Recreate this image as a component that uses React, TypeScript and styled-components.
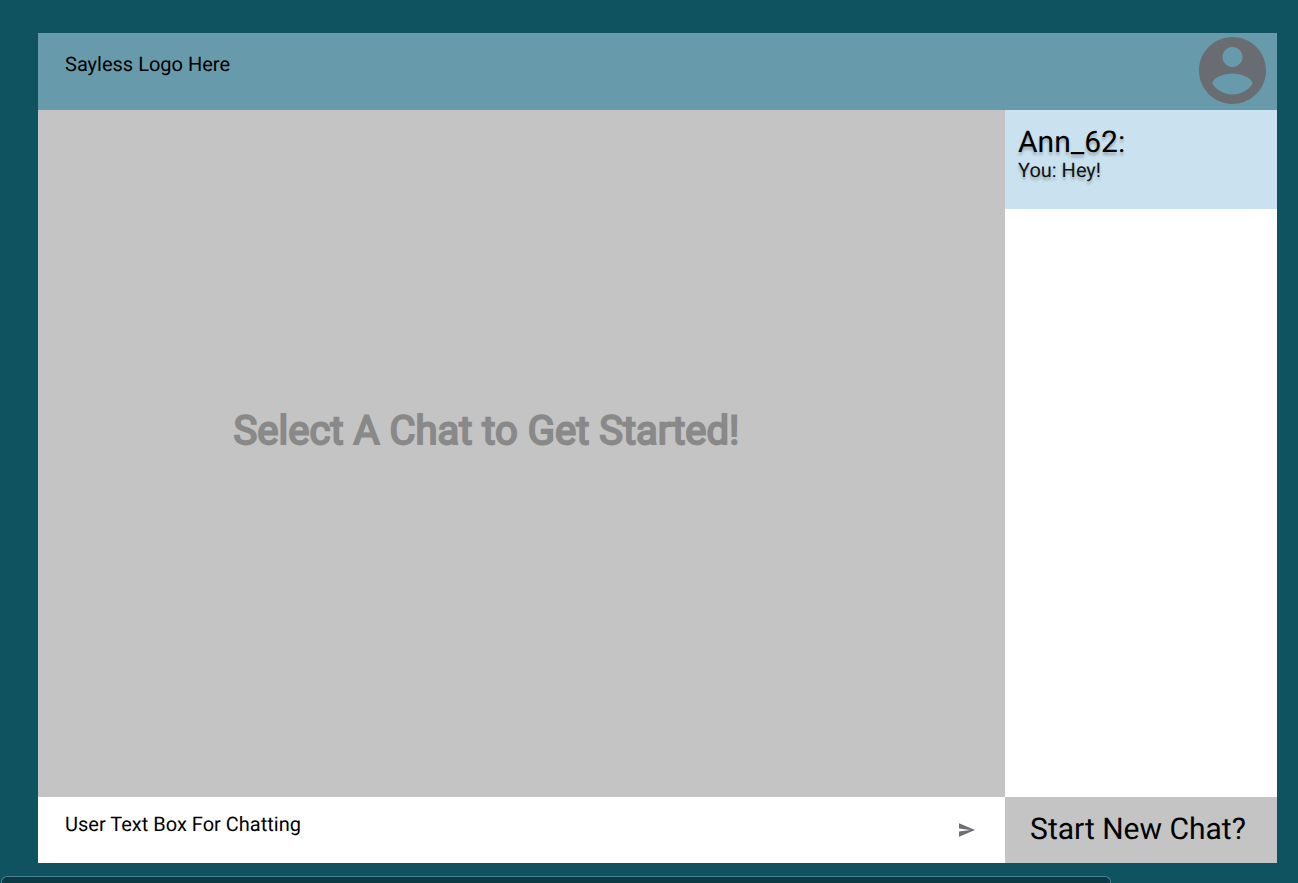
import React from 'react';
import styled, { createGlobalStyle } from 'styled-components';

const GlobalStyle = createGlobalStyle`
  *, *::before, *::after { box-sizing: border-box; }
  body {
    margin: 0;
    background: #0f5361;
    color: #000;
    font-family: Roboto, "Liberation Sans", sans-serif;
    font-size: 20px;
    line-height: 24px;
    text-rendering: geometricPrecision;
  }
  button, input { font: inherit; color: inherit; text-rendering: inherit; border: 0; border-radius: 0; margin: 0; padding: 0; background: none; }
  button { cursor: pointer; }
  h1, h2, p, ul { margin: 0; padding: 0; font-weight: 400; }
`;

const Page = styled.div`
  min-height: 100vh;
  display: flex;
  flex-direction: column;
`;

const Shell = styled.div`
  flex: 1;
  display: flex;
  flex-direction: column;
  margin: 33px 21px 13px 38px;
`;

const Header = styled.header`
  display: flex;
  justify-content: space-between;
  align-items: flex-start;
  height: 77px;
  padding: 4px 11px 0 27px;
  background: #679bab;
`;

const Logo = styled.p`
  margin-top: 15px;
`;

const ProfileButton = styled.button`
  display: flex;
  color: #696c71;
`;

const Columns = styled.div`
  flex: 1;
  display: grid;
  grid-template-columns: minmax(0, 1fr) 272px;
`;

const Conversation = styled.main`
  display: flex;
  flex-direction: column;
`;

const EmptyState = styled.div`
  flex: 1;
  display: flex;
  align-items: center;
  justify-content: center;
  padding: 0 70px 46px 0;
  background: #c4c4c4;
`;

const Prompt = styled.h1`
  font-size: 40px;
  line-height: 48px;
  color: #898989;
  -webkit-text-stroke: 2px #898989;
`;

const Composer = styled.form`
  display: flex;
  align-items: center;
  height: 66px;
  padding: 0 30px 0 27px;
  background: #fff;
`;

const MessageInput = styled.input`
  flex: 1;
  min-width: 0;
  height: 24px;
  margin-bottom: 12px;
  outline: none;
  &::placeholder { color: #000; opacity: 1; }
`;

const SendButton = styled.button`
  display: flex;
  color: #6c6e72;
`;

const Sidebar = styled.aside`
  display: flex;
  flex-direction: column;
  background: #fff;
`;

const ChatList = styled.ul`
  flex: 1;
  list-style: none;
`;

const ChatButton = styled.button`
  display: block;
  width: 100%;
  height: 99px;
  padding: 0 13px 10px;
  background: #cae2ef;
  text-align: left;
  text-shadow: 0 3px 3px rgba(0, 0, 0, 0.25);
`;

const ChatName = styled.span`
  display: block;
  font-size: 30px;
  line-height: 30px;
`;

const ChatPreview = styled.span`
  display: block;
  color: #111;
`;

const NewChatButton = styled.button`
  height: 66px;
  background: #c4c4c4;
  font-size: 30px;
  line-height: 36px;
  padding: 0 6px 0 0;
`;

const BottomPanel = styled.div`
  height: 7px;
  margin: 0 187px 0 1px;
  border: 1px solid #4c8290;
  border-bottom: 0;
  border-radius: 6px 6px 0 0;
  background: #0b3a45;
`;

const chats = [{ name: 'Ann_62', preview: 'You: Hey!' }];

export default function App() {
  return (
    <Page>
      <GlobalStyle />
      <Shell>
        <Header>
          <Logo>Sayless Logo Here</Logo>
          <ProfileButton type="button" aria-label="Profile">
            <svg width="67" height="67" viewBox="2 2 20 20" fill="currentColor" aria-hidden="true">
              <path d="M12 2C6.48 2 2 6.48 2 12s4.48 10 10 10 10-4.48 10-10S17.52 2 12 2zm0 3c1.66 0 3 1.34 3 3s-1.34 3-3 3-3-1.34-3-3 1.34-3 3-3zm0 14.2c-2.5 0-4.71-1.28-6-3.22.03-1.99 4-3.08 6-3.08 1.99 0 5.97 1.09 6 3.08-1.29 1.94-3.5 3.22-6 3.22z" />
            </svg>
          </ProfileButton>
        </Header>
        <Columns>
          <Conversation>
            <EmptyState>
              <Prompt>Select A Chat to Get Started!</Prompt>
            </EmptyState>
            <Composer onSubmit={(event) => event.preventDefault()}>
              <MessageInput aria-label="Message" placeholder="User Text Box For Chatting" />
              <SendButton type="submit" aria-label="Send">
                <svg width="16" height="14" viewBox="2 3 21 18" fill="currentColor" aria-hidden="true">
                  <path d="M2.01 21L23 12 2.01 3 2 10l15 2-15 2z" />
                </svg>
              </SendButton>
            </Composer>
          </Conversation>
          <Sidebar>
            <ChatList>
              {chats.map((chat) => (
                <li key={chat.name}>
                  <ChatButton type="button">
                    <ChatName>{chat.name}:</ChatName>
                    <ChatPreview>{chat.preview}</ChatPreview>
                  </ChatButton>
                </li>
              ))}
            </ChatList>
            <NewChatButton type="button">Start New Chat?</NewChatButton>
          </Sidebar>
        </Columns>
      </Shell>
      <BottomPanel />
    </Page>
  );
}
